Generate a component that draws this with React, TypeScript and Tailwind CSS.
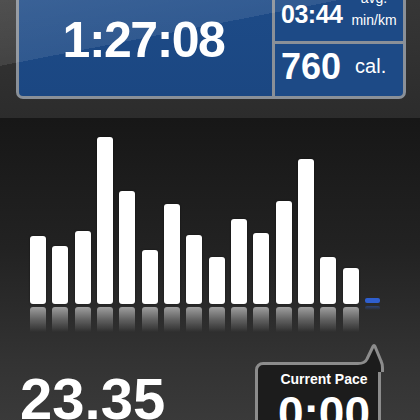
import React from "react";

const bars = [68, 58, 73, 167, 113, 54, 100, 69, 47, 85, 71, 103, 145, 47, 36];

export default function App() {
  return (
    <div
      className="w-[420px] h-[420px] overflow-hidden flex flex-col bg-[#1a1a1a] text-white"
      style={{ fontFamily: '"Liberation Sans", Arial, sans-serif' }}
    >
      {/* Top section with stats panel */}
      <div className="relative h-[118px] shrink-0 bg-[linear-gradient(180deg,#363636_0%,#2c2c2c_100%)] px-[16px]">
        <div className="mt-[-40px] w-[390px] border-[3px] border-[#8a9098] bg-[#8a9098] rounded-b-[7px] grid grid-cols-[253px_128px] grid-rows-[78px_52px] gap-[3px]">
          <div className="row-span-2 bg-[linear-gradient(180deg,#1e4c89_0%,#1b4782_100%)] rounded-bl-[4px] flex justify-center pt-[51.5px] pr-[4px]">
            <span className="text-[50px] leading-none font-bold tracking-[-1.5px]">1:27:08</span>
          </div>
          <div className="bg-[#1d4a86] flex items-end pb-[10px] pl-[6px]">
            <span className="text-[25px] leading-none font-bold mb-[4px] tracking-[-0.5px]">03:44</span>
            <div className="ml-[9px] flex flex-col items-center text-[14px] leading-[22px]">
              <span>avg.</span>
              <span>min/km</span>
            </div>
          </div>
          <div className="bg-[#1d4a86] rounded-br-[4px] flex items-start pt-[5px] pl-[6px]">
            <span className="text-[36px] leading-none font-bold">760</span>
            <span className="ml-[14px] mt-[7px] text-[20px] leading-none">cal.</span>
          </div>
        </div>
        <div className="pointer-events-none absolute inset-0 bg-[linear-gradient(169deg,rgba(255,255,255,0.13)_0%,rgba(255,255,255,0.09)_33%,rgba(255,255,255,0)_33%)]" />
      </div>

      {/* Chart + bottom */}
      <div className="flex-1 flex flex-col bg-[linear-gradient(180deg,#171717_0%,#222222_40%,#333333_75%,#3c3c3c_100%)]">
        <div className="h-[186px] flex items-end gap-[6.33px] pl-[30px]">
          {bars.map((h, i) => (
            <div
              key={i}
              className="w-[16px] bg-white rounded-[3px] shadow-[0_0_2px_rgba(0,0,0,0.5)]"
              style={{ height: h }}
            />
          ))}
          <div className="w-[15px] h-[5px] mb-[1px] bg-[#2f5fcf] rounded-[2px]" />
        </div>
        <div className="h-[25px] mt-[3px] flex items-start gap-[6.33px] pl-[30px]">
          {bars.map((_, i) => (
            <div
              key={i}
              className="w-[16px] h-[25px] rounded-t-[3px] bg-[linear-gradient(180deg,rgba(255,255,255,0.55)_0%,rgba(255,255,255,0.25)_50%,rgba(255,255,255,0)_100%)]"
            />
          ))}
          <div className="w-[15px] h-[4px] mt-[-1px] rounded-[2px] bg-[linear-gradient(180deg,rgba(47,95,207,0.45),rgba(47,95,207,0))]" />
        </div>

        <div className="flex items-start justify-between pt-[30px] pl-[20px] pr-[39px]">
          <span className="mt-[8.4px] text-[58px] leading-none font-bold">23.35</span>
          <div className="relative w-[126px] h-[80px] border-[3px] border-[#8c8c8c] bg-[#1c1c1c] rounded-[8px] rounded-tr-none flex flex-col items-center pt-[6.5px] pl-[12px]">
            <svg
              className="absolute left-[100px] top-[-23px]"
              width="28"
              height="30"
              viewBox="0 0 28 30"
            >
              <path
                d="M0 21.5 Q7 21.5 9 17 L15 4.5 Q16 2.5 17 4.5 L23 19 Q24.5 22 24.5 26 L24.5 30 L0 30 Z"
                fill="#1c1c1c"
              />
              <path
                d="M0 21.5 Q7 21.5 9 17 L15 4.5 Q16 2.5 17 4.5 L23 19 Q24.5 22 24.5 26 L24.5 30"
                fill="none"
                stroke="#8c8c8c"
                strokeWidth="3"
                strokeLinejoin="round"
              />
            </svg>
            <span className="relative text-[14px] leading-[14px] font-bold">Current Pace</span>
            <span className="relative mt-[4px] text-[46px] leading-none font-bold">0:00</span>
          </div>
        </div>
      </div>
    </div>
  );
}
